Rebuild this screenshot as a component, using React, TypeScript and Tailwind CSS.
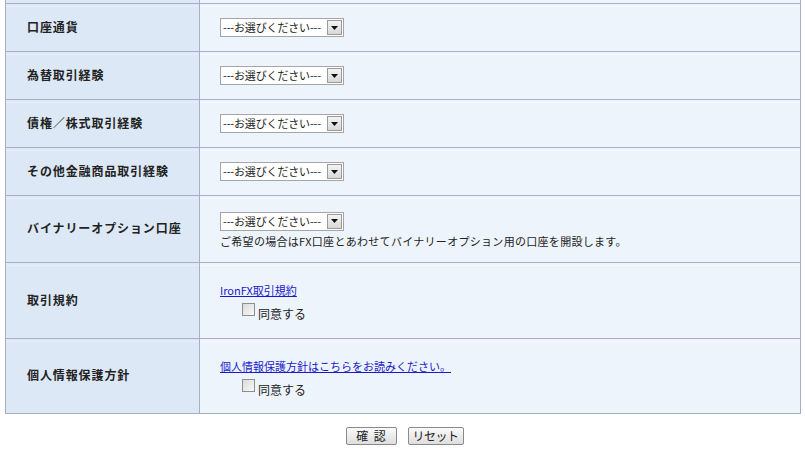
import React from "react";

const FONT = { fontFamily: '"Noto Sans CJK JP", "Noto Sans", sans-serif' };

function Select() {
  return (
    <div className="flex h-[19px] w-[124px] items-center border border-[#a5a5a5] bg-white pl-[2px] pr-[1px]">
      <span className="flex-1 whitespace-nowrap text-[11px] leading-none tracking-[-0.15px] text-[#222]">
        ---お選びください---
      </span>
      <div className="flex h-[15px] w-[15px] items-center justify-center border border-[#9a9a9a] bg-gradient-to-b from-[#f4f4f4] to-[#d8d8d8]">
        <svg width="7" height="4" viewBox="0 0 7 4">
          <path d="M0 0 H7 L3.5 4 Z" fill="#111" />
        </svg>
      </div>
    </div>
  );
}

function Agree() {
  return (
    <div className="ml-[22px] mt-[6px] flex items-end">
      <div className="h-[13px] w-[13px] border border-[#8e8e8e] bg-gradient-to-br from-[#dcdcdc] to-[#f8f8f8]" />
      <span className="ml-[3px] translate-y-[4px] text-[12px] leading-none text-[#222]">同意する</span>
    </div>
  );
}

function Row({ label, h, children }: { label: string; h: number; children?: React.ReactNode }) {
  return (
    <div className="flex border-b border-[#a7aec6]" style={{ height: h }}>
      <div className="flex w-[194px] items-center border-r border-[#a7aec6] bg-[#dce8f5] pb-[2px] pl-[21px] shadow-[inset_0_2px_0_#dce8f5,inset_0_3px_0_#e6eef8]">
        <span className="text-[12px] font-bold tracking-[0.9px] text-[#222]">{label}</span>
      </div>
      <div className="flex flex-1 flex-col justify-center bg-[#eef4fc] pl-[20px] shadow-[inset_0_2px_0_#eef4fc,inset_0_3px_0_#f6f9fe]">
        {children}
      </div>
    </div>
  );
}

export default function App() {
  return (
    <div className="h-[452px] w-[805px] bg-white" style={FONT}>
      <div className="ml-[5px] w-[796px] border-x border-[#a7aec6]">
        <div className="flex h-[4px] border-b border-[#a7aec6]">
          <div className="w-[194px] border-r border-[#a7aec6] bg-[#dce8f5]" />
          <div className="flex-1 bg-[#eef4fc]" />
        </div>
        <Row label="口座通貨" h={48}>
          <Select />
        </Row>
        <Row label="為替取引経験" h={48}>
          <Select />
        </Row>
        <Row label="債権／株式取引経験" h={48}>
          <Select />
        </Row>
        <Row label="その他金融商品取引経験" h={48}>
          <Select />
        </Row>
        <Row label="バイナリーオプション口座" h={67}>
          <div className="mt-[1px]">
            <Select />
          </div>
          <div className="mt-[3px] whitespace-nowrap text-[11px] leading-[14px] tracking-[0.3px] text-[#222]">
            ご希望の場合はFX口座とあわせてバイナリーオプション用の口座を開設します。
          </div>
        </Row>
        <Row label="取引規約" h={76}>
          <a href="#" className="-mt-[2px] w-fit text-[11px] leading-[14px] text-[#1a1acc] underline">
            IronFX取引規約
          </a>
          <Agree />
        </Row>
        <Row label="個人情報保護方針" h={75}>
          <a href="#" className="-mt-[2px] w-fit whitespace-nowrap text-[11px] leading-[14px] tracking-[0px] text-[#1a1acc] underline">
            個人情報保護方針はこちらをお読みください。
          </a>
          <Agree />
        </Row>
      </div>
      <div className="mt-[13px] flex justify-center gap-[11px] pl-[4px]">
        <button className="flex h-[18px] w-[51px] items-center justify-center rounded-[2px] border border-[#8a8a8a] bg-gradient-to-b from-[#fafafa] to-[#dedede] text-[12px] leading-none text-[#222]">
          確&nbsp;&nbsp;認
        </button>
        <button className="flex h-[18px] w-[56px] items-center justify-center rounded-[2px] border border-[#8a8a8a] bg-gradient-to-b from-[#fafafa] to-[#dedede] text-[12px] leading-none tracking-[-0.5px] text-[#222]">
          リセット
        </button>
      </div>
    </div>
  );
}
